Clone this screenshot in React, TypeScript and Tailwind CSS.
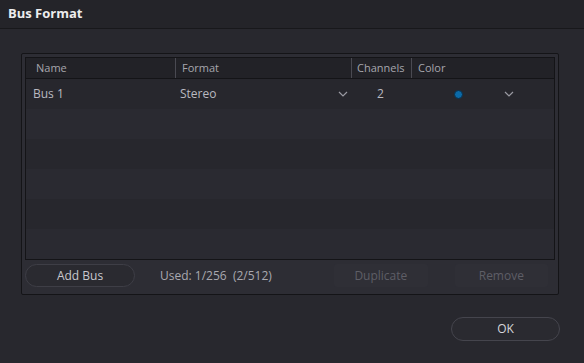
import React from 'react';

const Chevron = ({ className = '' }: { className?: string }) => (
  <svg width="10" height="6" viewBox="0 0 10 6" className={className} fill="none">
    <path d="M1 1l4 4 4-4" stroke="#9a9aa2" strokeWidth="1.2" />
  </svg>
);

export default function App() {
  const stripes = [0, 1, 2, 3, 4, 5];
  return (
    <div
      className="w-[584px] h-[363px] bg-[#28282e] flex flex-col overflow-hidden"
      style={{ fontFamily: '"Open Sans", "Noto Sans", sans-serif' }}
    >
      <div className="h-[29px] shrink-0 bg-[#242429] border-b border-[#18181b] flex items-center px-2">
        <span className="text-[13px] font-bold text-[#ececee]">Bus Format</span>
      </div>

      <div className="flex-1 flex flex-col px-[21px] pt-[24px]">
        <div className="w-[538px] h-[242px] bg-[#2d2d34] border border-[#141417] rounded-[2px] flex flex-col p-[3px]">
          <div className="h-[203px] bg-[#27272d] border border-[#141417] flex flex-col">
            <div className="h-[21px] shrink-0 bg-[#222227] border-b border-[#141417] flex text-[11px] text-[#a6a6ad]">
              <div className="w-[150px] pl-[10px] border-r border-[#4a4a52] flex items-center">Name</div>
              <div className="w-[176px] pl-[6px] border-r border-[#4a4a52] flex items-center">Format</div>
              <div className="w-[60px] pl-[5px] border-r border-[#4a4a52] flex items-center">Channels</div>
              <div className="flex-1 pl-[6px] flex items-center">Color</div>
            </div>
            <div className="flex-1 flex flex-col">
              {stripes.map((i) => (
                <div
                  key={i}
                  className={`h-[30px] shrink-0 flex items-center text-[12px] text-[#b9b9c0] ${
                    i % 2 === 0 ? 'bg-[#27272d]' : 'bg-[#2a2a31]'
                  }`}
                >
                  {i === 0 && (
                    <>
                      <div className="w-[150px] pl-[7px]">Bus 1</div>
                      <div className="w-[176px] pl-[4px] flex items-center justify-between pr-[4px]">
                        <span>Stereo</span>
                        <Chevron />
                      </div>
                      <div className="w-[60px] pl-[25px]">2</div>
                      <div className="flex-1 flex items-center">
                        <span className="ml-[42px] w-[9px] h-[9px] rounded-full bg-[#0b6aa8] border border-[#0a2f4a]" />
                        <Chevron className="ml-[41px]" />
                      </div>
                    </>
                  )}
                </div>
              ))}
            </div>
          </div>
          <div className="flex-1 flex items-center text-[12px]">
            <button className="w-[110px] h-[23px] rounded-full border border-[#3e3e46] bg-[#2a2a30] text-[#c8c8ce]">
              Add Bus
            </button>
            <span className="ml-[25px] text-[#a9a9b0]">Used: 1/256&nbsp;&nbsp;(2/512)</span>
            <button className="ml-[62px] w-[94px] h-[23px] rounded-[3px] bg-[#2f2f36] text-[#5e5e66]">
              Duplicate
            </button>
            <button className="ml-[27px] w-[93px] h-[23px] rounded-[3px] bg-[#2f2f36] text-[#5e5e66]">
              Remove
            </button>
          </div>
        </div>

        <div className="flex justify-end mt-[22px] pr-[3px]">
          <button className="w-[109px] h-[24px] rounded-full border border-[#45454d] bg-[#2a2a30] text-[12px] text-[#d6d6da]">
            OK
          </button>
        </div>
      </div>
    </div>
  );
}
